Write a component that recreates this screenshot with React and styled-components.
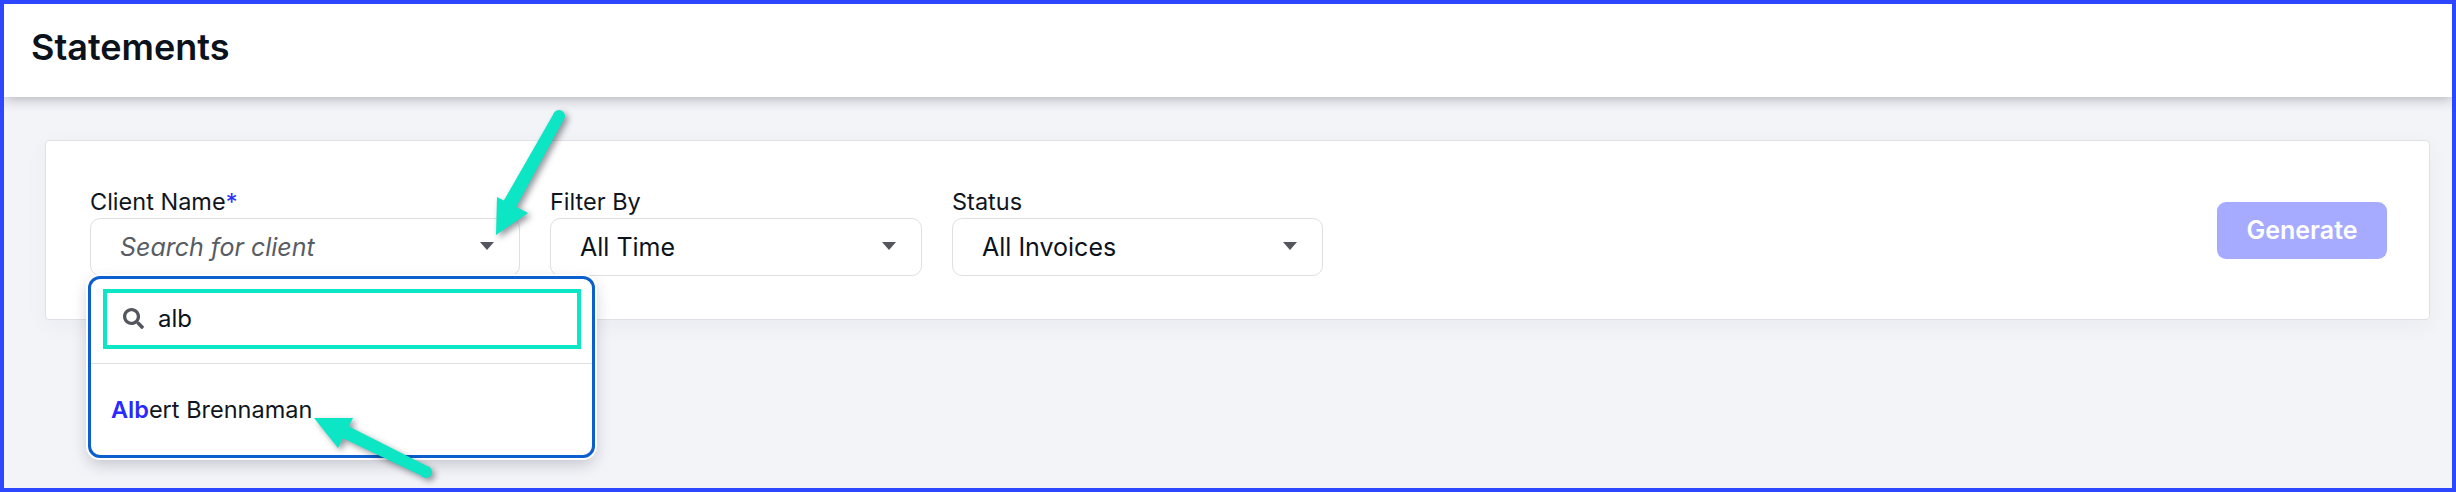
import styled, { createGlobalStyle } from 'styled-components'
import { FaSearch } from 'react-icons/fa'

const GlobalStyle = createGlobalStyle`
  html, body {
    margin: 0;
    padding: 0;
    background: #f3f4f8;
    font-family: Inter, "Liberation Sans", sans-serif;
  }
`

const Page = styled.div`
  position: relative;
  box-sizing: border-box;
  width: 2456px;
  height: 492px;
  border: 4px solid #2d46ff;
  background: #f3f4f8;
  overflow: hidden;
`

const Header = styled.header`
  display: flex;
  align-items: center;
  height: 93px;
  padding: 0 0 8px 27px;
  box-sizing: border-box;
  background: #fff;
  box-shadow: 0 2px 12px rgba(20, 24, 40, 0.3);
`

const Title = styled.h1`
  margin: 0;
  font-size: 36px;
  font-weight: 600;
  color: #0c121c;
`

const Content = styled.main`
  padding: 43px 22px 0 41px;
`

const Card = styled.section`
  box-sizing: border-box;
  display: flex;
  align-items: center;
  justify-content: space-between;
  height: 180px;
  padding: 0 42px 0 44px;
  background: #fff;
  border: 1px solid #e0e1e6;
  border-radius: 4px;
  box-shadow: 0 6px 24px rgba(30, 34, 50, 0.04);
`

const Filters = styled.div`
  display: flex;
  gap: 30px;
`

const Field = styled.div`
  position: relative;
  width: ${(p) => p.$width}px;
`

const Label = styled.label`
  display: block;
  height: 33px;
  line-height: 33px;
  font-size: 23.5px;
  color: #0f1520;
`

const Required = styled.span`
  color: #2a2aff;
`

const Select = styled.div`
  box-sizing: border-box;
  display: flex;
  align-items: center;
  justify-content: space-between;
  height: 58px;
  padding: 0 25px 0 29px;
  border: 1px solid #dfe0e4;
  border-radius: 10px;
  background: #fff;
  font-size: 25px;
  color: ${(p) => (p.$placeholder ? '#585c64' : '#0c121c')};
  font-style: ${(p) => (p.$placeholder ? 'italic' : 'normal')};
`

const Caret = styled.span`
  width: 0;
  height: 0;
  border-left: 7px solid transparent;
  border-right: 7px solid transparent;
  border-top: 8px solid #54565e;
  margin-top: -2px;
`

const Popup = styled.div`
  position: absolute;
  z-index: 2;
  top: 91px;
  left: -2px;
  box-sizing: border-box;
  width: 507px;
  height: 182px;
  padding-top: 10px;
  background: #fff;
  border: 3px solid #0b5fce;
  border-radius: 12px;
  box-shadow: 0 0 0 2px #fff, 0 6px 16px rgba(20, 24, 40, 0.22);
`

const SearchBox = styled.div`
  box-sizing: border-box;
  display: flex;
  align-items: center;
  gap: 14px;
  height: 60px;
  margin: 0 11px 14px 12px;
  padding-left: 16px;
  border: 4px solid #0ce6c4;
  font-size: 24px;
  color: #0c121c;
  svg {
    width: 21px;
    height: 21px;
    color: #54565e;
  }
`

const Divider = styled.hr`
  height: 1px;
  margin: 0;
  border: 0;
  background: #e0e1e6;
`

const Option = styled.div`
  padding: 30px 0 0 20px;
  line-height: 32px;
  font-size: 23.5px;
  color: #0f1520;
`

const Match = styled.b`
  font-weight: 600;
  color: #2a2aff;
`

const GenerateButton = styled.button`
  width: 170px;
  height: 57px;
  padding: 0;
  border: 0;
  border-radius: 9px;
  background: #a6abff;
  color: #fff;
  font-family: inherit;
  font-size: 25px;
  font-weight: 600;
`

const Annotations = styled.svg`
  position: absolute;
  z-index: 3;
  top: -4px;
  left: -4px;
  pointer-events: none;
  filter: drop-shadow(3px 3px 3px rgba(20, 24, 40, 0.45));
`

function App() {
  return (
    <Page>
      <GlobalStyle />
      <Header>
        <Title>Statements</Title>
      </Header>
      <Content>
        <Card>
          <Filters>
            <Field $width={430}>
              <Label>
                Client Name<Required>*</Required>
              </Label>
              <Select $placeholder>
                Search for client
                <Caret />
              </Select>
              <Popup>
                <SearchBox>
                  <FaSearch />
                  alb
                </SearchBox>
                <Divider />
                <Option>
                  <Match>Alb</Match>ert Brennaman
                </Option>
              </Popup>
            </Field>
            <Field $width={372}>
              <Label>Filter By</Label>
              <Select>
                All Time
                <Caret />
              </Select>
            </Field>
            <Field $width={371}>
              <Label>Status</Label>
              <Select>
                All Invoices
                <Caret />
              </Select>
            </Field>
          </Filters>
          <GenerateButton>Generate</GenerateButton>
        </Card>
      </Content>
      <Annotations width="2456" height="492" viewBox="0 0 2456 492">
        <g fill="#0ce6c4">
          <circle cx="559" cy="116" r="6" />
          <path d="M564 119 L554 113 L503 202 L515 209 Z" />
          <path d="M496 235 L497 197 L528 213 Z" />
          <circle cx="426" cy="472" r="6" />
          <path d="M429 467 L424 477 L332 433 L338 421 Z" />
          <path d="M314 418 L353 418 L338 448 Z" />
        </g>
      </Annotations>
    </Page>
  )
}

export default App
